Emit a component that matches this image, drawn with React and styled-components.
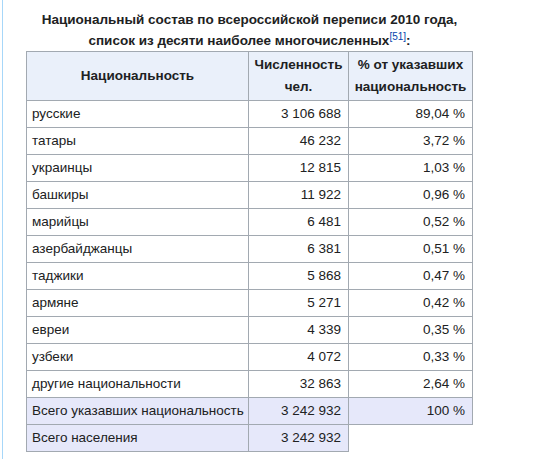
import React from "react";
import styled, { createGlobalStyle } from "styled-components";

const Global = createGlobalStyle`
  html, body { margin: 0; padding: 0; background: #fff; }
  body { font-family: "Liberation Sans", Arial, sans-serif; color: #202122; }
`;

const Page = styled.div`
  padding-left: 2px;
  height: 459px;
  box-sizing: border-box;
`;

const Content = styled.div`
  border-left: 1px solid #a7d7f9;
  height: 100%;
  padding: 10px 0 0 23px;
  box-sizing: border-box;
`;

const Table = styled.table`
  border-collapse: collapse;
  font-size: 13.5px;
  width: 446px;
  table-layout: fixed;
`;

const Caption = styled.caption`
  font-weight: bold;
  line-height: 20.5px;
  text-align: center;
  padding-bottom: 0;
`;

const Ref = styled.sup`
  font-weight: normal;
  font-size: 10px;
  line-height: 1;
  color: #0645ad;
  vertical-align: 5px;
`;

const Th = styled.th`
  background: #eaf0fa;
  border: 1px solid #a2a9b1;
  padding: 2px 5px;
  line-height: 22px;
  font-weight: bold;
  text-align: center;
  vertical-align: middle;
`;

const Td = styled.td`
  background: ${(p) => (p.$total ? "#e6e8fa" : "#fff")};
  border: 1px solid #a2a9b1;
  padding: 2px 7px 2px 5px;
  line-height: 22px;
  text-align: ${(p) => (p.$num ? "right" : "left")};
  white-space: nowrap;
`;

const rows = [
  ["русские", "3 106 688", "89,04 %"],
  ["татары", "46 232", "3,72 %"],
  ["украинцы", "12 815", "1,03 %"],
  ["башкиры", "11 922", "0,96 %"],
  ["марийцы", "6 481", "0,52 %"],
  ["азербайджанцы", "6 381", "0,51 %"],
  ["таджики", "5 868", "0,47 %"],
  ["армяне", "5 271", "0,42 %"],
  ["евреи", "4 339", "0,35 %"],
  ["узбеки", "4 072", "0,33 %"],
  ["другие национальности", "32 863", "2,64 %"],
];

export default function App() {
  return (
    <>
      <Global />
      <Page>
        <Content>
          <Table>
            <Caption>
              Национальный состав по всероссийской переписи 2010 года,
              <br />
              список из десяти наиболее многочисленных<Ref>[51]</Ref>:
            </Caption>
            <colgroup>
              <col style={{ width: "222px" }} />
              <col style={{ width: "100px" }} />
              <col style={{ width: "124px" }} />
            </colgroup>
            <thead>
              <tr>
                <Th>Национальность</Th>
                <Th>
                  Численность
                  <br />
                  чел.
                </Th>
                <Th>
                  % от указавших
                  <br />
                  национальность
                </Th>
              </tr>
            </thead>
            <tbody>
              {rows.map((r) => (
                <tr key={r[0]}>
                  <Td>{r[0]}</Td>
                  <Td $num>{r[1]}</Td>
                  <Td $num>{r[2]}</Td>
                </tr>
              ))}
              <tr>
                <Td $total>Всего указавших национальность</Td>
                <Td $total $num>3 242 932</Td>
                <Td $total $num>100 %</Td>
              </tr>
              <tr>
                <Td $total>Всего населения</Td>
                <Td $total $num>3 242 932</Td>
              </tr>
            </tbody>
          </Table>
        </Content>
      </Page>
    </>
  );
}
